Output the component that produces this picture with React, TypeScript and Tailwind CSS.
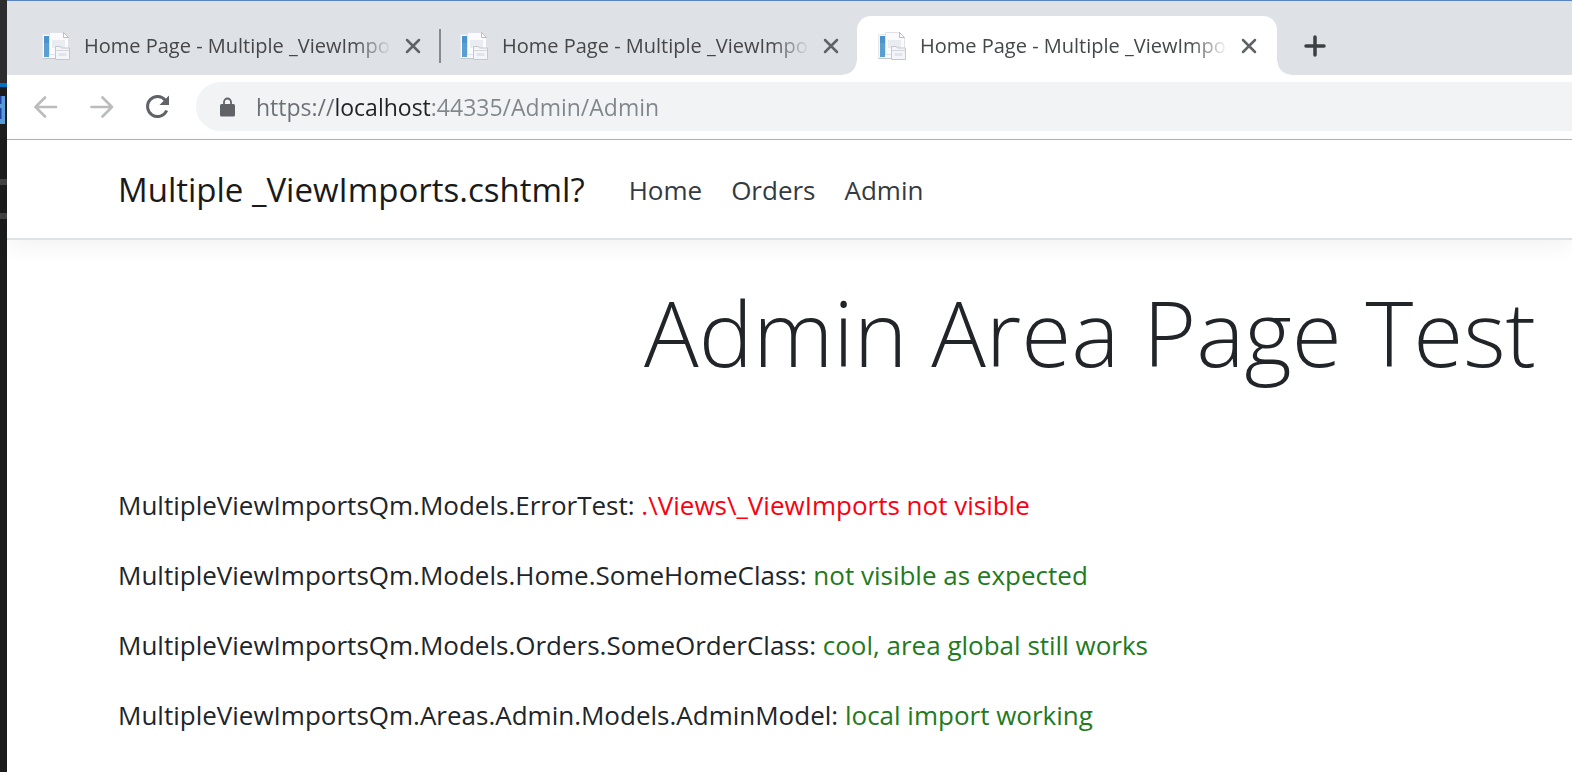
import React from "react";

const TAB_TITLE = "Home Page - Multiple _ViewImports.cshtml?";

const results = [
  { name: "MultipleViewImportsQm.Models.ErrorTest:", note: ".\\Views\\_ViewImports not visible", ok: false },
  { name: "MultipleViewImportsQm.Models.Home.SomeHomeClass:", note: "not visible as expected", ok: true },
  { name: "MultipleViewImportsQm.Models.Orders.SomeOrderClass:", note: "cool, area global still works", ok: true },
  { name: "MultipleViewImportsQm.Areas.Admin.Models.AdminModel:", note: "local import working", ok: true },
];

function Favicon() {
  return (
    <svg viewBox="0 0 28 28" className="h-7 w-7 shrink-0" aria-hidden="true">
      <path d="M.5 2.500h14v24H.5z" fill="#f8f9fb" stroke="#e6e9ee" />
      <path d="M.5 26.500h17" stroke="#c4c8ce" />
      <path d="M2 4h5v21H2z" fill="#5a9fd2" />
      <path d="M2 4h5v7H2z" fill="#4a93cc" />
      <path d="M7.500.5h14l5 5v17h-19z" fill="#fbfbfd" stroke="#dfe2e7" />
      <path d="M21.500.5v5h5z" fill="#fff" stroke="#b9bdc4" />
      <path d="M10 8h13v8H10z" fill="#e9ecf1" />
      <path d="M13.500 14.500h5l1 1.500h8v11.500h-14z" fill="#f4f5f9" stroke="#c3c7ce" />
      <path d="M14 18.500h13" stroke="#d3d6dc" />
      <path d="M16.500 21h8v3h-8z" fill="#e0e4ed" />
    </svg>
  );
}

function CloseIcon() {
  return (
    <svg viewBox="0 0 16 16" className="h-4 w-4" fill="none" stroke="#5f6368" strokeWidth="2.500" strokeLinecap="round" aria-hidden="true">
      <path d="M2 2l12 12M14 2L2 14" />
    </svg>
  );
}

function Tab({ active = false }: { active?: boolean }) {
  return (
    <div
      className={
        active
          ? "relative flex h-[59px] w-[420px] shrink-0 items-center rounded-t-[14px] bg-white pl-[21px]"
          : "flex h-[59px] w-[418px] shrink-0 items-center pl-[21px]"
      }
    >
      {active && (
        <>
          <span className="absolute bottom-0 -left-[14px] h-[14px] w-[14px] bg-[radial-gradient(circle_at_0_0,transparent_13px,white_14px)]" />
          <span className="absolute -right-[14px] bottom-0 h-[14px] w-[14px] bg-[radial-gradient(circle_at_100%_0,transparent_13px,white_14px)]" />
        </>
      )}
      <button className="flex items-center gap-[14px] text-left">
        <Favicon />
        <span className="block w-[306px] overflow-hidden text-[20px] leading-7 whitespace-nowrap text-[#45474a] [mask-image:linear-gradient(to_right,black_270px,transparent_308px)]">
          {TAB_TITLE}
        </span>
      </button>
      <button className="ml-[11px] flex h-6 w-6 items-center justify-center" aria-label="Close tab">
        <CloseIcon />
      </button>
    </div>
  );
}

export default function App() {
  return (
    <div className="flex min-h-screen overflow-hidden bg-white font-['Open_Sans','Noto_Sans',sans-serif]">
      <aside className="flex w-[7px] shrink-0 flex-col bg-[#1c1c1c]" aria-hidden="true">
        <div className="h-[83px] bg-[#2d2d30]" />
        <div className="h-1 bg-[#0072c6]" />
        <svg viewBox="0 0 7 28" className="mt-[9px] h-7 w-[7px]">
          <path d="M0 0h5v28H0z" fill="#569cd6" />
          <path d="M0 0h1.500v8H0zM0 12h1.500v11H0z" fill="#23409c" />
        </svg>
        <div className="mt-[55px] h-[6px] bg-[#434346]" />
        <div className="mt-7 h-[6px] bg-[#434346]" />
      </aside>

      <div className="min-w-0 flex-1">
        <header>
          <div className="flex h-[75px] items-end overflow-hidden border-t border-[#5b84c8] bg-[#dee1e6] pl-[14px]">
            <Tab />
            <div className="mb-3 h-[34px] w-[2px] shrink-0 bg-[#878a8e]" />
            <div className="-ml-[2px]">
              <Tab />
            </div>
            <Tab active />
            <button className="mb-[17px] ml-[26px] flex h-6 w-6 shrink-0 items-center justify-center" aria-label="New tab">
              <svg viewBox="0 0 22 22" className="h-[22px] w-[22px]" fill="none" stroke="#3c4043" strokeWidth="3.500" strokeLinecap="round" aria-hidden="true">
                <path d="M2 11h18M11 2v18" />
              </svg>
            </button>
          </div>

          <div className="flex h-[65px] items-center border-b border-[#b0b1b3] pb-px pl-[25px]">
            <div className="flex gap-7">
              <button aria-label="Back" className="h-7 w-7">
                <svg viewBox="0 0 28 28" fill="none" stroke="#babcbe" strokeWidth="2.700" strokeLinecap="round" strokeLinejoin="round">
                  <path d="M24 14H4M13 4.500L3.500 14l9.500 9.500" />
                </svg>
              </button>
              <button aria-label="Forward" className="h-7 w-7">
                <svg viewBox="0 0 28 28" fill="none" stroke="#babcbe" strokeWidth="2.700" strokeLinecap="round" strokeLinejoin="round">
                  <path d="M3.500 14H24M14.500 4.500L24 14l-9.500 9.500" />
                </svg>
              </button>
              <button aria-label="Reload" className="h-7 w-7">
                <svg viewBox="0 0 28 28">
                  <path d="M21.300 7.200A10 10 0 1 0 22.700 17.500" fill="none" stroke="#5f6368" strokeWidth="3" />
                  <path d="M25 2.500V12H15.500z" fill="#5f6368" />
                </svg>
              </button>
            </div>
            <div className="ml-6 flex h-[49px] flex-1 items-center rounded-l-full bg-[#f1f3f4] pl-6">
              <svg viewBox="0 0 15 20" className="h-5 w-[15px] shrink-0" aria-hidden="true">
                <path d="M4 8V5a3.500 3.500 0 0 1 7 0v3" fill="none" stroke="#5f6368" strokeWidth="1.800" />
                <rect y="7" width="15" height="12.500" rx="1.500" fill="#5f6368" />
              </svg>
              <input
                aria-label="Address"
                defaultValue="https://localhost:44335/Admin/Admin"
                className="ml-[21px] h-10 min-w-0 flex-1 bg-[linear-gradient(to_right,#6b6f74_79px,#202124_79px,#202124_176px,#80868b_176px)] bg-clip-text text-[23px] text-transparent outline-none"
              />
            </div>
          </div>
        </header>

        <nav className="flex h-[100px] items-center border-b-2 border-[#dee2e6] pt-[2px] pl-[111px] whitespace-nowrap shadow-[0_7px_21px_rgba(0,0,0,0.05)]">
          <a href="#" className="text-[33px] text-[#1a1a1a]">
            Multiple _ViewImports.cshtml?
          </a>
          <div className="ml-11 flex gap-[29px] text-[26px] text-[#343a40]">
            <a href="#">Home</a>
            <a href="#">Orders</a>
            <a href="#">Admin</a>
          </div>
        </nav>

        <main className="pl-[111px] whitespace-nowrap text-[#212529]">
          <h1 className="pt-[33px] pr-9 text-right text-[91px] leading-[118px] font-light">Admin Area Page Test</h1>
          <div className="mt-[93px] flex flex-col gap-7 text-[26px] leading-[42px]">
            {results.map((r) => (
              <p key={r.name}>
                {r.name} <span className={r.ok ? "text-[#237a1c]" : "text-[#fa0010]"}>{r.note}</span>
              </p>
            ))}
          </div>
        </main>
      </div>
    </div>
  );
}
